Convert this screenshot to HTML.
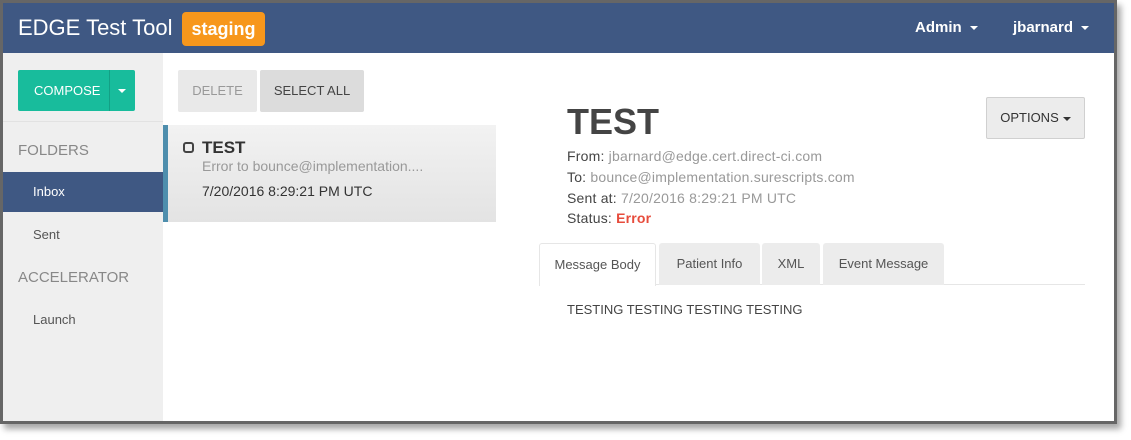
<!DOCTYPE html>
<html><head><style>
*{margin:0;padding:0;box-sizing:border-box}
body{width:1131px;height:440px;background:#fff;font-family:"Liberation Sans",sans-serif;position:relative;overflow:hidden}
.frame{position:absolute;left:0;top:0;width:1117px;height:424px;border:3px solid #666;box-shadow:4px 5px 6px rgba(0,0,0,.35);background:#fff;overflow:hidden}
.nav{position:absolute;left:0;top:0;width:100%;height:50px;background:#3f5883;color:#fff}
.brand{position:absolute;left:15px;top:12px;font-size:22px}
.badge{position:absolute;left:179px;top:9px;width:83px;height:34px;background:#f7971c;border-radius:4px;font-weight:bold;font-size:18px;text-align:center;line-height:34px}
.nr{position:absolute;top:16px;font-weight:bold;font-size:15px}
.car{display:inline-block;border-left:4px solid transparent;border-right:4px solid transparent;border-top:4px solid #fff;vertical-align:middle;margin-left:8px}
.side{position:absolute;left:0;top:50px;width:160px;bottom:0;background:#efefef}
.comp{position:absolute;left:15px;top:17px;width:117px;height:41px;background:#18bc9c;border-radius:2px;color:#fff;font-size:13px;line-height:41px}
.comp span{position:absolute;left:16px}
.comp i{position:absolute;left:91px;top:0;bottom:0;border-left:1px solid #13a085}
.comp b{position:absolute;left:100px;top:19px;border-left:4px solid transparent;border-right:4px solid transparent;border-top:4px solid #fff}
.hr{position:absolute;left:0;top:68px;width:160px;border-top:1px solid #e2e2e2}
.si{position:absolute;left:0;width:160px;font-size:13px;color:#555;padding-left:30px}
.sh{position:absolute;left:15px;font-size:15px;color:#888}
.btn{position:absolute;top:67px;height:42px;line-height:42px;font-size:13px;text-align:center;border-radius:2px}
.item{position:absolute;left:160px;top:122px;width:333px;height:97px;background:linear-gradient(#f2f2f2,#e3e3e3);border-left:5px solid #4e8ead}
.tab{position:absolute;top:240px;height:42px;line-height:42px;font-size:13px;color:#555;background:#ececec;text-align:center;border-radius:3px 3px 0 0}
.meta{position:absolute;left:564px;font-size:14px;color:#444;letter-spacing:.2px}
.meta span{color:#999}
</style></head><body>
<div class="frame">
<div class="nav">
<div class="brand">EDGE Test Tool</div>
<div class="badge">staging</div>
<div class="nr" style="left:912px">Admin<span class="car"></span></div>
<div class="nr" style="left:1010px">jbarnard<span class="car"></span></div>
</div>
<div class="side">
<div class="comp"><span>COMPOSE</span><i></i><b></b></div>
<div class="hr"></div>
<div class="sh" style="top:89px">FOLDERS</div>
<div class="si" style="top:119px;height:40px;line-height:40px;background:#3f5883;color:#fff">Inbox</div>
<div class="si" style="top:174px">Sent</div>
<div class="sh" style="top:216px">ACCELERATOR</div>
<div class="si" style="top:259px">Launch</div>
</div>
<div class="btn" style="left:175px;width:79px;background:#e9e9e9;color:#999">DELETE</div>
<div class="btn" style="left:257px;width:104px;background:#dcdcdc;color:#444">SELECT ALL</div>
<div class="item">
<div style="position:absolute;left:15px;top:17px;width:11px;height:11px;border:2px solid #444;border-radius:3px"></div>
<div style="position:absolute;left:34px;top:13px;font-weight:bold;font-size:17px;color:#333">TEST</div>
<div style="position:absolute;left:34px;top:33px;font-size:14px;color:#999">Error to bounce@implementation....</div>
<div style="position:absolute;left:34px;top:58px;font-size:14px;color:#333">7/20/2016 8:29:21 PM UTC</div>
</div>
<div style="position:absolute;left:564px;top:98px;font-size:36px;font-weight:bold;color:#444">TEST</div>
<div style="position:absolute;left:983px;top:94px;width:99px;height:42px;background:#ececec;border:1px solid #d0d0d0;border-radius:2px;font-size:13px;color:#333;line-height:40px;text-align:center">OPTIONS<span class="car" style="border-top-color:#333;margin-left:4px"></span></div>
<div class="meta" style="top:145px">From: <span>jbarnard@edge.cert.direct-ci.com</span></div>
<div class="meta" style="top:166px">To: <span>bounce@implementation.surescripts.com</span></div>
<div class="meta" style="top:187px">Sent at: <span>7/20/2016 8:29:21 PM UTC</span></div>
<div class="meta" style="top:207px">Status: <b style="color:#e74c3c">Error</b></div>
<div style="position:absolute;left:536px;top:281px;width:546px;border-top:1px solid #e6e6e6"></div>
<div class="tab" style="left:536px;width:117px;background:#fff;border:1px solid #e6e6e6;border-bottom:none;height:43px">Message Body</div>
<div class="tab" style="left:656px;width:101px">Patient Info</div>
<div class="tab" style="left:759px;width:58px">XML</div>
<div class="tab" style="left:820px;width:121px">Event Message</div>
<div style="position:absolute;left:564px;top:299px;font-size:13px;color:#444">TESTING TESTING TESTING TESTING</div>
</div>
</body></html>
